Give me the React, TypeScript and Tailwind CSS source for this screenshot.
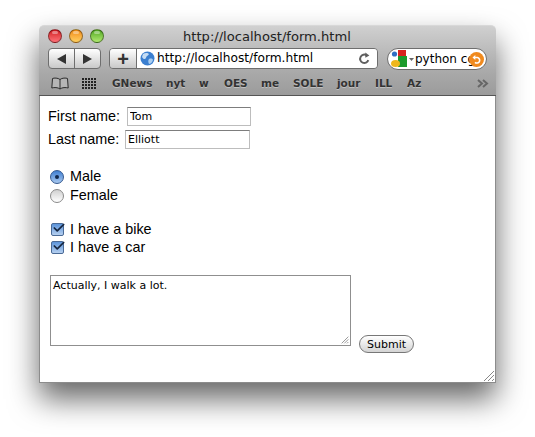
import { Check } from "lucide-react"

const bookmarks = [
  { name: "GNews", w: "w-[54px]" },
  { name: "nyt", w: "w-[33px]" },
  { name: "w", w: "w-[25px]" },
  { name: "OES", w: "w-[37px]" },
  { name: "me", w: "w-[32px]" },
  { name: "SOLE", w: "w-[44px]" },
  { name: "jour", w: "w-[38px]" },
  { name: "ILL", w: "w-[32px]" },
  { name: "Az", w: "w-[30px]" },
]

function Light({ color }: { color: string }) {
  return (
    <span className={`relative w-[14px] h-[14px] rounded-full border border-black/40 ${color}`}>
      <span className="absolute left-[3px] top-[1px] w-[6px] h-[3px] rounded-full bg-white/40" />
    </span>
  )
}

function Globe() {
  return (
    <svg width="15" height="15" viewBox="0 0 15 15" className="shrink-0">
      <circle cx="7.5" cy="7.5" r="7" fill="#3b7fd0" />
      <path d="M3 3 C5 1.5 8 1.5 9 3 C8 5 6 5 6 7 C5 9 3 8 2 6 Z" fill="#c5dcf3" />
      <path d="M9 8 C11 7 13 8 13 9 C12 12 10 13 9 13 C8 11 8 9 9 8 Z" fill="#a9cdf0" />
    </svg>
  )
}

function Reload() {
  return (
    <svg width="13" height="13" viewBox="0 0 13 13" className="shrink-0">
      <path d="M10.3 8.2 A4.2 4.2 0 1 1 8.6 3.3" fill="none" stroke="#5f5f5f" strokeWidth="2" />
      <path d="M7.3 0.6 L11.4 3.4 L7.3 5.8 Z" fill="#5f5f5f" />
    </svg>
  )
}

function GoogleLogo() {
  return (
    <svg width="23" height="18" viewBox="0 0 23 18" className="shrink-0">
      <circle cx="3.5" cy="4" r="2.6" fill="#2f6fc4" />
      <rect x="7" y="0" width="8" height="7" fill="#d8231f" />
      <rect x="7" y="6" width="9" height="11" fill="#1c9a2c" />
      <ellipse cx="4.5" cy="13.5" rx="4.5" ry="3.5" fill="#efb71c" />
      <path d="M18 8 L23 8 L20.5 11 Z" fill="#666" />
    </svg>
  )
}

function RadioMark({ checked }: { checked: boolean }) {
  if (checked) {
    return (
      <span className="w-[14px] h-[14px] rounded-full border border-[#33588f] bg-gradient-to-b from-[#3f7fd2] to-[#a8c8ee] flex items-center justify-center shrink-0">
        <span className="w-[4px] h-[4px] rounded-full bg-[#10264a]" />
      </span>
    )
  }
  return <span className="w-[14px] h-[14px] rounded-full border border-[#8a8a8a] bg-gradient-to-b from-[#d0d0d0] to-white shrink-0" />
}

function CheckMark() {
  return (
    <span className="relative w-[13px] h-[13px] rounded-[2px] border border-[#4a6a96] bg-gradient-to-b from-[#5b94da] to-[#b5cfef] shrink-0">
      <Check size={14} strokeWidth={3} className="absolute -top-[3px] left-0 text-[#15253f]" />
    </span>
  )
}

function Grip({ size, color }: { size: number; color: string }) {
  return (
    <svg width={size} height={size} viewBox="0 0 12 12">
      <path d="M11 1 L1 11 M11 5 L5 11 M11 9 L9 11" stroke={color} strokeWidth="1" fill="none" />
    </svg>
  )
}

export default function App() {
  return (
    <div className="w-[535px] h-[437px] bg-white pt-[25px] pl-[39px] overflow-hidden font-['Liberation_Sans',sans-serif]">
      <div className="relative w-[457px] h-[358px] flex flex-col rounded-t-[5px] shadow-[0_16px_30px_rgba(0,0,0,0.6)]">
        {/* chrome */}
        <div className="h-[46px] flex flex-col rounded-t-[5px] border-t border-[#d8d8d8] bg-gradient-to-b from-[#d0d0d0] to-[#aaaaaa]">
          <div className="relative h-[20px] flex items-center gap-[7px] pl-[9px]">
            <Light color="bg-gradient-to-b from-[#d0101c] to-[#ff7078]" />
            <Light color="bg-gradient-to-b from-[#f08a08] to-[#ffd060]" />
            <Light color="bg-gradient-to-b from-[#50a81c] to-[#b0ea70]" />
            <span className="absolute left-[144px] top-[2px] text-[13.1px] leading-[18px] text-[#222] font-['DejaVu_Sans',sans-serif]">
              http://localhost/form.html
            </span>
          </div>
          <div className="flex items-center h-[25px] pl-[9px]">
            <div className="flex w-[53px] h-[21px] rounded-[4px] border border-[#6e6e6e] bg-gradient-to-b from-white to-[#c9c9c9]">
              <div className="w-[26px] border-r border-[#6e6e6e] flex items-center justify-center">
                <span className="w-0 h-0 border-y-[5px] border-y-transparent border-r-[9px] border-r-[#333]" />
              </div>
              <div className="flex-1 flex items-center justify-center">
                <span className="w-0 h-0 border-y-[5px] border-y-transparent border-l-[9px] border-l-[#333]" />
              </div>
            </div>
            <div className="ml-[8px] flex w-[269px] h-[21px] rounded-[4px] border border-[#6e6e6e] overflow-hidden">
              <div className="w-[27px] border-r border-[#6e6e6e] bg-gradient-to-b from-white to-[#c9c9c9] flex items-center justify-center text-[20px] leading-none font-bold text-[#333]">
                +
              </div>
              <div className="flex-1 bg-white flex items-center pl-[3px] pr-[6px]">
                <Globe />
                <span className="ml-[2px] flex-1 text-[12.2px] leading-none text-black font-['DejaVu_Sans',sans-serif] whitespace-nowrap">
                  http://localhost/form.html
                </span>
                <Reload />
              </div>
            </div>
            <div className="ml-[9px] relative flex items-center w-[100px] h-[22px] rounded-full border border-[#6e6e6e] bg-white pl-[3px] overflow-hidden">
              <GoogleLogo />
              <span className="ml-[1px] text-[12px] leading-none text-black font-['DejaVu_Sans',sans-serif] whitespace-nowrap">python cg</span>
              <span className="absolute right-[2px] top-[3px] w-[15px] h-[15px] rounded-full bg-[#f08a1e] flex items-center justify-center">
                <svg width="11" height="11" viewBox="0 0 11 11">
                  <path d="M3 3.5 H6.5 A2.8 2.8 0 1 1 4 8.3" fill="none" stroke="white" strokeWidth="1.6" />
                  <path d="M4.3 1 L1.5 3.5 L4.3 6 Z" fill="white" />
                </svg>
              </span>
            </div>
          </div>
        </div>
        <div className="h-[25px] flex items-center bg-gradient-to-b from-[#aaaaaa] to-[#9b9b9b] border-b border-[#555] pl-[12px]">
          <svg width="18" height="13" viewBox="0 0 18 13" className="shrink-0">
            <path d="M9 2.5 C7 0.8 3 0.8 1.5 1.5 L0.8 11 C3 10.3 7 10.3 9 12 C11 10.3 15 10.3 17.2 11 L16.5 1.5 C15 0.8 11 0.8 9 2.5 Z M9 2.5 V12" fill="#b5b5b5" stroke="#2c2c2c" strokeWidth="1" />
          </svg>
          <div className="ml-[13px] grid grid-cols-[repeat(5,2px)] gap-[1px] w-[15px] shrink-0">
            {Array.from({ length: 20 }).map((_, i) => (
              <span key={i} className="h-[2px] bg-[#222]" />
            ))}
          </div>
          <div className="ml-[15px] flex items-center text-[10.5px] leading-none font-bold text-[#333] font-['DejaVu_Sans',sans-serif]">
            {bookmarks.map((b) => (
              <span key={b.name} className={`${b.w} [text-shadow:0_1px_0_rgba(255,255,255,0.35)]`}>
                {b.name}
              </span>
            ))}
          </div>
          <svg width="12" height="9" viewBox="0 0 12 9" className="ml-[40px] shrink-0">
            <path d="M1 1 L5 4.5 L1 8 M6 1 L10 4.5 L6 8" fill="none" stroke="#666" strokeWidth="2" />
          </svg>
        </div>

        {/* page */}
        <div className="relative flex-1 bg-white border-x border-b border-[#8c8c8c] pl-[8px] pt-[11px] text-[14.4px] leading-[19px] text-black">
          <form>
            <div className="flex items-center h-[19px]">
              <label className="w-[79px] whitespace-nowrap">First name:</label>
              <input defaultValue="Tom" className="w-[124px] h-[19px] border border-[#bdbdbd] border-t-[#7d7d7d] pl-[2px] text-[11px] font-['DejaVu_Sans',sans-serif] outline-none" />
            </div>
            <div className="flex items-center h-[19px] mt-[4px]">
              <label className="w-[77px] whitespace-nowrap">Last name:</label>
              <input defaultValue="Elliott" className="w-[125px] h-[19px] border border-[#bdbdbd] border-t-[#7d7d7d] pl-[2px] text-[11px] font-['DejaVu_Sans',sans-serif] outline-none" />
            </div>

            <div className="mt-[18px] ml-[2px] flex items-center h-[19px]">
              <RadioMark checked />
              <span className="ml-[6px]">Male</span>
            </div>
            <div className="ml-[2px] flex items-center h-[19px]">
              <RadioMark checked={false} />
              <span className="ml-[6px]">Female</span>
            </div>

            <div className="mt-[15px] ml-[3px] flex items-center h-[18px]">
              <CheckMark />
              <span className="ml-[6px]">I have a bike</span>
            </div>
            <div className="ml-[3px] flex items-center h-[18px]">
              <CheckMark />
              <span className="ml-[6px]">I have a car</span>
            </div>

            <div className="mt-[19px] ml-[2px] flex items-end">
              <div className="relative w-[301px] h-[71px] border border-[#8f8f8f] pl-[2px] pt-[2px] text-[11px] leading-[15px] font-['DejaVu_Sans',sans-serif]">
                Actually, I walk a lot.
                <span className="absolute right-[1px] bottom-[1px] flex">
                  <Grip size={8} color="#666" />
                </span>
              </div>
              <button type="button" className="ml-[8px] -mb-[7px] w-[55px] h-[18px] rounded-full border border-[#777] bg-gradient-to-b from-white to-[#d4d4d4] text-[11px] leading-none font-['DejaVu_Sans',sans-serif] text-black">
                Submit
              </button>
            </div>
          </form>
          <span className="absolute right-0 bottom-0 flex">
            <Grip size={12} color="#888" />
          </span>
        </div>
      </div>
    </div>
  )
}
